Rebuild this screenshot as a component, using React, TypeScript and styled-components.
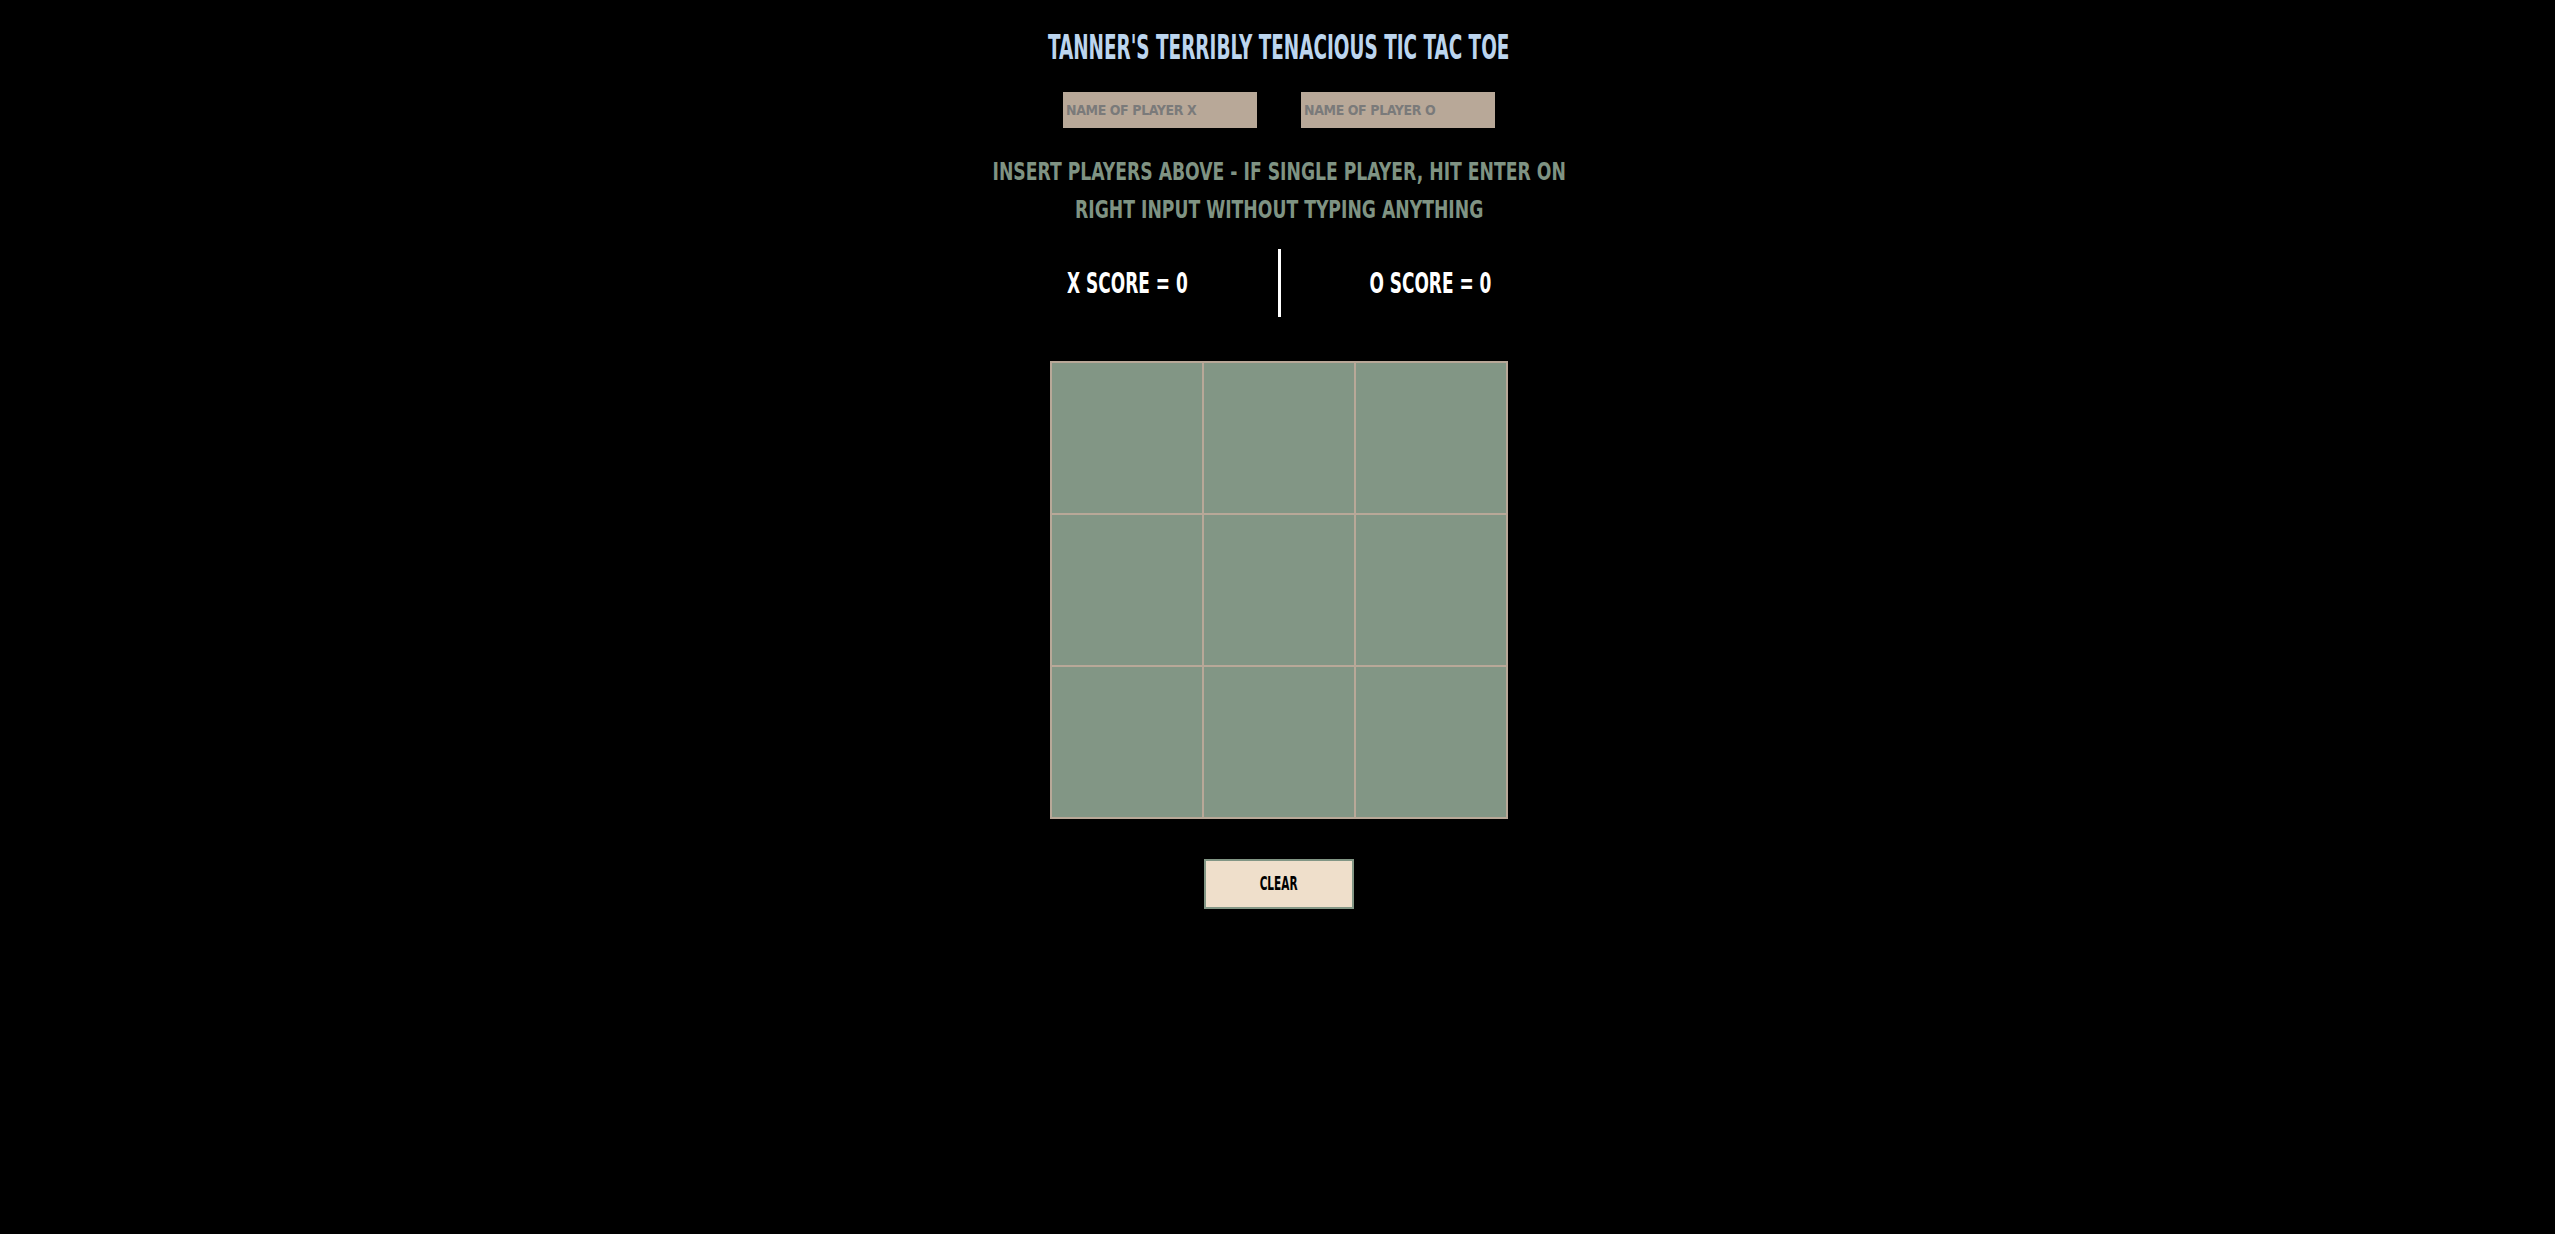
import React from 'react';
import styled, { createGlobalStyle } from 'styled-components';

const GlobalStyle = createGlobalStyle`
  html, body {
    margin: 0;
    padding: 0;
    background: #000;
  }
  body {
    font-family: "Liberation Sans Narrow", "DejaVu Sans Condensed", "Liberation Sans", sans-serif;
    font-weight: 700;
    text-transform: uppercase;
  }
`;

const Page = styled.main`
  display: flex;
  flex-direction: column;
  align-items: center;
  box-sizing: border-box;
  min-height: 1234px;
  padding: 28px 0 0 3px;
  background: #000;
`;

const Squeeze = styled.span<{ $sx: number }>`
  display: inline-block;
  white-space: nowrap;
  transform: scaleX(${(p) => p.$sx});
  transform-origin: center;
`;

const Title = styled.h1`
  margin: 0;
  font-size: 33.5px;
  line-height: 40px;
  font-weight: 700;
  color: #bcd5ee;
  text-align: center;
`;

const NameRow = styled.div`
  display: flex;
  gap: 44px;
  margin-top: 24px;
`;

const NameInput = styled.input`
  box-sizing: border-box;
  width: 194px;
  height: 36px;
  border: none;
  outline: none;
  padding: 0 3px;
  background: #b8a898;
  color: #333;
  font-family: "Liberation Sans Narrow", "DejaVu Sans Condensed", "Liberation Sans", sans-serif;
  font-weight: 700;
  font-size: 14px;
  letter-spacing: -0.4px;
  text-transform: uppercase;

  &::placeholder {
    color: #7a7a7a;
    opacity: 1;
  }
`;

const Instructions = styled.p`
  margin: 25px 0 0;
  font-size: 24.4px;
  line-height: 38.4px;
  color: #7f9383;
  text-align: center;
`;

const ScoreRow = styled.div`
  display: flex;
  align-items: center;
  margin-top: 19px;
`;

const Score = styled.div`
  width: 300px;
  text-align: center;
  color: #fff;
  font-size: 28.6px;
  line-height: 34px;
`;

const Divider = styled.div`
  width: 3px;
  height: 68px;
  background: #fff;
`;

const Board = styled.div`
  display: grid;
  grid-template-columns: repeat(3, 152px);
  grid-template-rows: repeat(3, 152px);
  border: 1px solid #b8a898;
  margin-top: 44px;
`;

const Cell = styled.div`
  box-sizing: border-box;
  border: 1px solid #b8a898;
  background: #829685;
`;

const ClearButton = styled.button`
  box-sizing: border-box;
  width: 150px;
  height: 50px;
  margin-top: 40px;
  padding: 0;
  border: 2px solid #829685;
  background: #efdfcb;
  color: #000;
  font-family: "Liberation Sans Narrow", "DejaVu Sans Condensed", "Liberation Sans", sans-serif;
  font-weight: 700;
  font-size: 19.5px;
  text-transform: uppercase;
  cursor: pointer;
`;

export default function App() {
  const cells = Array.from({ length: 9 }, (_, i) => i);
  return (
    <>
      <GlobalStyle />
      <Page>
        <Title>
          <Squeeze $sx={0.611}>Tanner's Terribly Tenacious Tic Tac Toe</Squeeze>
        </Title>
        <NameRow>
          <NameInput placeholder="Name of Player X" />
          <NameInput placeholder="Name of Player O" />
        </NameRow>
        <Instructions>
          <Squeeze $sx={0.785}>
            Insert players above - if single player, hit enter on
            <br />
            right input without typing anything
          </Squeeze>
        </Instructions>
        <ScoreRow>
          <Score>
            <Squeeze $sx={0.66}>X score = 0</Squeeze>
          </Score>
          <Divider />
          <Score>
            <Squeeze $sx={0.66}>O score = 0</Squeeze>
          </Score>
        </ScoreRow>
        <Board>
          {cells.map((i) => (
            <Cell key={i} />
          ))}
        </Board>
        <ClearButton>
          <Squeeze $sx={0.6}>Clear</Squeeze>
        </ClearButton>
      </Page>
    </>
  );
}
